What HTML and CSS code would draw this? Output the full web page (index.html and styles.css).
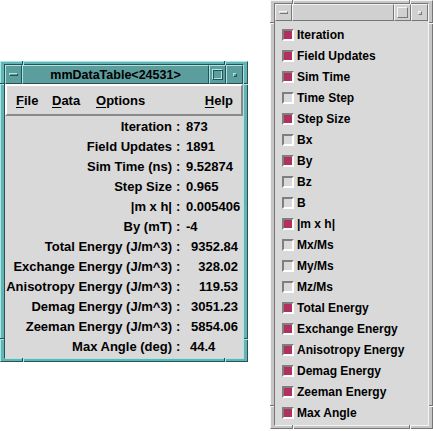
FILE: index.html
```html
<!DOCTYPE html>
<html>
<head>
<meta charset="utf-8">
<link rel="stylesheet" href="styles.css">
</head>
<body>
<div class="desk">
  <div class="win win-data">
    <span class="notch nt1"></span><span class="notch nt2"></span>
    <span class="notch nb1"></span><span class="notch nb2"></span>
    <span class="notch nl1"></span><span class="notch nl2"></span>
    <span class="notch nr1"></span><span class="notch nr2"></span>
    <div class="frame-in">
      <div class="titlebar">
        <div class="tbtn"><span class="g-min"></span></div>
        <div class="ttl">mmDataTable&lt;24531&gt;</div>
        <div class="tbtn"><span class="g-max"></span></div>
        <div class="tbtn"><span class="g-icon"></span></div>
      </div>
      <div class="client">
        <div class="menubar">
          <span class="mi m-file"><u>F</u>ile</span>
          <span class="mi m-data"><u>D</u>ata</span>
          <span class="mi m-opt"><u>O</u>ptions</span>
          <span class="mi m-help"><u>H</u>elp</span>
        </div>
        <div class="table">
          <div class="row"><span class="lbl">Iteration</span><span class="col">:</span><span class="val">873</span></div>
          <div class="row"><span class="lbl">Field Updates</span><span class="col">:</span><span class="val">1891</span></div>
          <div class="row"><span class="lbl">Sim Time (ns)</span><span class="col">:</span><span class="val">9.52874</span></div>
          <div class="row"><span class="lbl">Step Size</span><span class="col">:</span><span class="val">0.965</span></div>
          <div class="row"><span class="lbl">|m x h|</span><span class="col">:</span><span class="val">0.005406</span></div>
          <div class="row"><span class="lbl">By (mT)</span><span class="col">:</span><span class="val">-4</span></div>
          <div class="row"><span class="lbl">Total Energy (J/m^3)</span><span class="col">:</span><span class="val num">9352.84</span></div>
          <div class="row"><span class="lbl">Exchange Energy (J/m^3)</span><span class="col">:</span><span class="val num">328.02</span></div>
          <div class="row"><span class="lbl">Anisotropy Energy (J/m^3)</span><span class="col">:</span><span class="val num">119.53</span></div>
          <div class="row"><span class="lbl">Demag Energy (J/m^3)</span><span class="col">:</span><span class="val num">3051.23</span></div>
          <div class="row"><span class="lbl">Zeeman Energy (J/m^3)</span><span class="col">:</span><span class="val num">5854.06</span></div>
          <div class="row"><span class="lbl">Max Angle (deg)</span><span class="col">:</span><span class="val ind">44.4</span></div>
        </div>
      </div>
    </div>
  </div>

  <div class="win win-sel">
    <span class="notch nt1"></span><span class="notch nt2"></span>
    <span class="notch nb1"></span><span class="notch nb2"></span>
    <span class="notch nl1"></span><span class="notch nl2"></span>
    <span class="notch nr1"></span><span class="notch nr2"></span>
    <div class="frame-in">
      <div class="titlebar">
        <div class="tbtn"><span class="g-min"></span></div>
        <div class="ttl"></div>
        <div class="tbtn"><span class="g-max"></span></div>
        <div class="tbtn"><span class="g-icon"></span></div>
      </div>
      <div class="client checks">
        <div class="chk"><span class="box on"></span>Iteration</div>
        <div class="chk"><span class="box on"></span>Field Updates</div>
        <div class="chk"><span class="box on"></span>Sim Time</div>
        <div class="chk"><span class="box"></span>Time Step</div>
        <div class="chk"><span class="box on"></span>Step Size</div>
        <div class="chk"><span class="box"></span>Bx</div>
        <div class="chk"><span class="box on"></span>By</div>
        <div class="chk"><span class="box"></span>Bz</div>
        <div class="chk"><span class="box"></span>B</div>
        <div class="chk"><span class="box on"></span>|m x h|</div>
        <div class="chk"><span class="box"></span>Mx/Ms</div>
        <div class="chk"><span class="box"></span>My/Ms</div>
        <div class="chk"><span class="box"></span>Mz/Ms</div>
        <div class="chk"><span class="box on"></span>Total Energy</div>
        <div class="chk"><span class="box on"></span>Exchange Energy</div>
        <div class="chk"><span class="box on"></span>Anisotropy Energy</div>
        <div class="chk"><span class="box on"></span>Demag Energy</div>
        <div class="chk"><span class="box on"></span>Zeeman Energy</div>
        <div class="chk"><span class="box on"></span>Max Angle</div>
      </div>
    </div>
  </div>
</div>
</body>
</html>
```
FILE: styles.css
```css
html, body {
  margin: 0;
  padding: 0;
  background: #ffffff;
}
.desk {
  position: relative;
  width: 433px;
  height: 431px;
  overflow: hidden;
  font-family: "Liberation Sans", Arial, sans-serif;
  font-weight: bold;
  color: #000;
}
.win {
  position: absolute;
  box-sizing: border-box;
  border-style: solid;
  border-width: 1px;
  border-color: var(--light) var(--dark) var(--dark) var(--light);
  background: var(--fill);
  padding: 2px 3px;
  display: flex;
}
.win-data {
  --light: #a6e8e8;
  --dark: #2c5050;
  --fill: #63b4b4;
  --tfill: #5c9e9e;
  left: 0;
  top: 61px;
  width: 248px;
  height: 301px;
  font-size: 13px;
}
.win-sel {
  --light: #f4f4f4;
  --dark: #767676;
  --fill: #c6c6c6;
  --tfill: #d0d0d0;
  left: 270px;
  top: 0;
  width: 163px;
  height: 429px;
  font-size: 12px;
}
.notch {
  position: absolute;
  box-sizing: border-box;
}
.nt1, .nt2, .nb1, .nb2 {
  width: 2px;
  height: 4px;
  border-left: 1px solid var(--dark);
  border-right: 1px solid var(--light);
}
.nl1, .nl2, .nr1, .nr2 {
  width: 4px;
  height: 2px;
  border-top: 1px solid var(--dark);
  border-bottom: 1px solid var(--light);
}
.nt1 { top: -1px; left: 21px; }
.nt2 { top: -1px; right: 21px; }
.nb1 { bottom: -1px; left: 21px; }
.nb2 { bottom: -1px; right: 21px; }
.nl1 { left: -1px; top: 21px; }
.nl2 { left: -1px; bottom: 21px; }
.nr1 { right: -1px; top: 21px; }
.nr2 { right: -1px; bottom: 21px; }

.frame-in {
  flex: 1;
  display: flex;
  flex-direction: column;
  border-style: solid;
  border-width: 1px;
  border-color: var(--dark) var(--light) var(--light) var(--dark);
  min-width: 0;
}
.titlebar {
  display: flex;
  height: 19px;
  flex: none;
  background: var(--tfill);
}
.win-sel .titlebar { height: 17px; }
.tbtn, .ttl {
  box-sizing: border-box;
  border-style: solid;
  border-width: 1px;
  border-color: var(--light) var(--dark) var(--dark) var(--light);
  display: flex;
  align-items: center;
  justify-content: center;
}
.tbtn {
  width: 17px;
  flex: none;
}
.ttl {
  flex: 1;
  font-size: 12.5px;
  white-space: nowrap;
  overflow: hidden;
  padding-top: 1px;
}
.g-min {
  box-sizing: border-box;
  width: 9px;
  height: 3px;
  border-style: solid;
  border-width: 1px;
  border-color: var(--light) var(--dark) var(--dark) var(--light);
}
.g-max {
  box-sizing: border-box;
  width: 11px;
  height: 11px;
  border-style: solid;
  border-width: 1px;
  border-color: var(--light) var(--dark) var(--dark) var(--light);
  box-shadow: inset 1px 1px 0 var(--dark), inset -1px -1px 0 var(--light);
}
.win-sel .g-max { box-shadow: none; }
.g-icon {
  box-sizing: border-box;
  width: 4px;
  height: 4px;
  border-style: solid;
  border-width: 1px;
  border-color: var(--light) var(--dark) var(--dark) var(--light);
}
.client {
  flex: 1;
  background: #d9d9d9;
  display: flex;
  flex-direction: column;
}
.menubar {
  height: 32px;
  box-sizing: border-box;
  flex: none;
  display: flex;
  align-items: center;
  border-style: solid;
  border-width: 2px;
  border-color: #ffffff #8a8a8a #8a8a8a #ffffff;
  padding-left: 9px;
  padding-right: 8px;
}
.mi u { text-decoration-thickness: 1px; text-underline-offset: 2px; }
.m-file { width: 36px; }
.m-data { width: 44px; }
.m-help { margin-left: auto; }
.table {
  display: flex;
  flex-direction: column;
}
.row {
  height: 20px;
  display: flex;
  align-items: center;
  white-space: nowrap;
}
.lbl {
  width: 167px;
  flex: none;
  text-align: right;
}
.col {
  margin-left: 4px;
  width: 4px;
  flex: none;
}
.val {
  margin-left: 6px;
}
.val.num {
  width: 52px;
  text-align: right;
}
.val.ind { margin-left: 10px; }

.checks {
  padding: 3px 0 2px 7px;
}
.chk {
  height: 21px;
  display: flex;
  align-items: center;
  white-space: nowrap;
}
.box {
  box-sizing: border-box;
  width: 12px;
  height: 12px;
  flex: none;
  border-style: solid;
  border-width: 2px;
  border-color: #7f7f7f #ffffff #ffffff #7f7f7f;
  background: #d9d9d9;
  margin-right: 3px;
}
.box.on { background: #b03060; }
```
